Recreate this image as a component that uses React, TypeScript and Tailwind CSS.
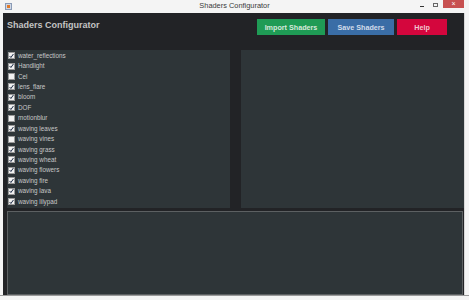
import React from "react";

const items: [string, boolean][] = [
  ["water_reflections", true],
  ["Handlight", true],
  ["Cel", false],
  ["lens_flare", true],
  ["bloom", true],
  ["DOF", true],
  ["motionblur", false],
  ["waving leaves", true],
  ["waving vines", false],
  ["waving grass", true],
  ["waving wheat", true],
  ["waving flowers", true],
  ["waving fire", true],
  ["waving lava", true],
  ["waving lilypad", true],
];

function Box({ checked }: { checked: boolean }) {
  return (
    <div className="w-[7px] h-[7px] bg-[#f2f2f2] border border-[#9a9a9a] flex items-center justify-center shrink-0">
      {checked && (
        <svg width="6" height="6" viewBox="0 0 6 6">
          <path d="M0.8 3.1 L2.3 4.8 L5.3 0.6" stroke="#1c2a44" strokeWidth="1.2" fill="none" />
        </svg>
      )}
    </div>
  );
}

export default function App() {
  return (
    <div
      className="w-[469px] h-[300px] bg-[#f4f4f4] flex flex-col overflow-hidden"
      style={{ fontFamily: '"Liberation Sans", Arial, sans-serif' }}
    >
      {/* title bar */}
      <div className="h-[13px] flex items-start relative shrink-0">
        <div className="ml-[5px] mt-[3px] w-[7px] h-[7px] bg-[#cfd8e6] border border-[#8a9ab5] flex items-center justify-center">
          <div className="w-[3px] h-[3px] bg-[#e07a2a]" />
        </div>
        <div className="absolute left-0 right-0 top-[1px] text-center text-[7.4px] text-[#3a3a3a] leading-[10px]">
          Shaders Configurator
        </div>
        <div className="absolute left-[420px] top-[6px] w-[4px] h-[1px] bg-[#333]" />
        <div className="absolute left-[433px] top-[3px] w-[5px] h-[4px] border border-[#666]" />
        <div className="absolute left-[443px] top-0 w-[21px] h-[8px] bg-[#c75050] flex items-center justify-center text-white text-[7px] leading-[8px]">
          ×
        </div>
      </div>
      {/* body */}
      <div className="flex-1 flex">
        <div className="w-[3px] shrink-0" />
        <div className="w-[461px] h-[282px] bg-[#222326] flex flex-col">
          {/* header */}
          <div className="h-[37px] flex items-start shrink-0">
            <div className="ml-[4px] mt-[7px] text-[9px] font-bold text-[#c4c4c4] leading-[11px]">
              Shaders Configurator
            </div>
            <div className="ml-auto mr-[17px] mt-[6px] flex gap-[3px]">
              <div className="w-[68px] h-[16px] bg-[#1f9b55] flex items-center justify-center text-[7.2px] font-bold text-[#d8e8dc] pt-[2px]">
                Import Shaders
              </div>
              <div className="w-[66px] h-[16px] bg-[#3a6da6] flex items-center justify-center text-[7.2px] font-bold text-[#d2dcea] pt-[2px]">
                Save Shaders
              </div>
              <div className="w-[50px] h-[16px] bg-[#d4063d] flex items-center justify-center text-[7.2px] font-bold text-[#f0c6d0] pt-[2px]">
                Help
              </div>
            </div>
          </div>
          {/* panels */}
          <div className="h-[158px] flex pl-[4px] shrink-0">
            <div className="w-[223px] bg-[#2e3538] pt-[0.5px] pl-[1px]">
              {items.map(([label, checked]) => (
                <div key={label} className="h-[10.43px] flex items-center gap-[3px]">
                  <Box checked={checked} />
                  <span className="text-[6.3px] text-[#c8c8c8] leading-[8px]">{label}</span>
                </div>
              ))}
            </div>
            <div className="w-[11px]" />
            <div className="flex-1 bg-[#2e3538]" />
          </div>
          {/* bottom panel */}
          <div className="mt-[3px] ml-[4px] mr-[1px] flex-1 bg-[#2e3538] border border-[#5c6062]" />
        </div>
        <div className="flex-1 border-l border-[#d8d8d8]" />
      </div>
      <div className="h-[5px] border-t border-[#9a9a9a] shrink-0" />
    </div>
  );
}
